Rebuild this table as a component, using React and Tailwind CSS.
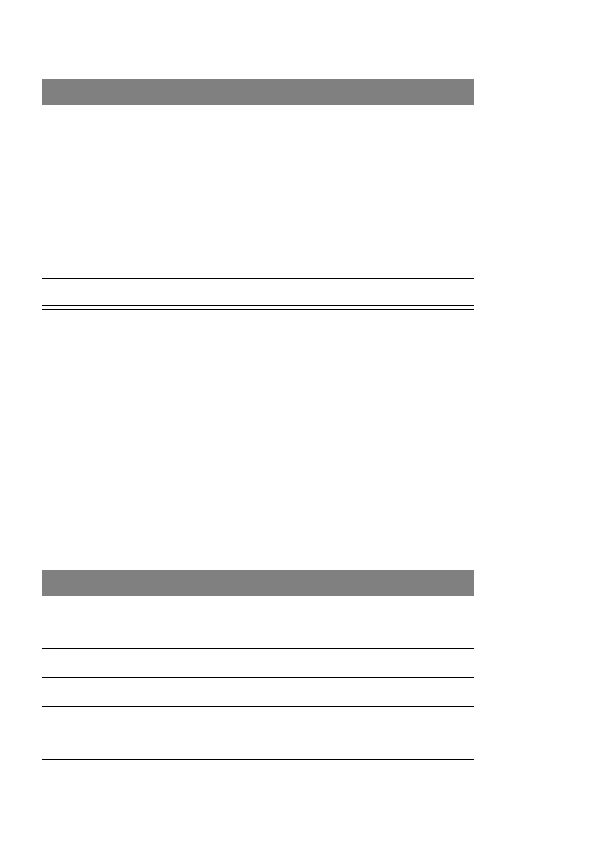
export default function App() {
  return (
    <div className="w-[596px] h-[842px] bg-white" style={{ fontFamily: '"Liberation Sans", Arial, sans-serif' }}>
      <div className="ml-[42px] w-[432px] flex flex-col pt-[79px]">
        <section className="flex flex-col">
          <div className="h-[26px] bg-[#808080]"></div>
          <div className="h-[174px] border-b border-black"></div>
          <div className="h-[27px] border-b border-black"></div>
          <div className="h-[4px] border-b border-black"></div>
        </section>
        <section className="flex flex-col mt-[260px]">
          <div className="h-[26px] bg-[#808080]"></div>
          <div className="h-[53px] border-b border-black"></div>
          <div className="h-[29px] border-b border-black"></div>
          <div className="h-[29px] border-b border-black"></div>
          <div className="h-[53px] border-b border-black"></div>
        </section>
      </div>
    </div>
  );
}
